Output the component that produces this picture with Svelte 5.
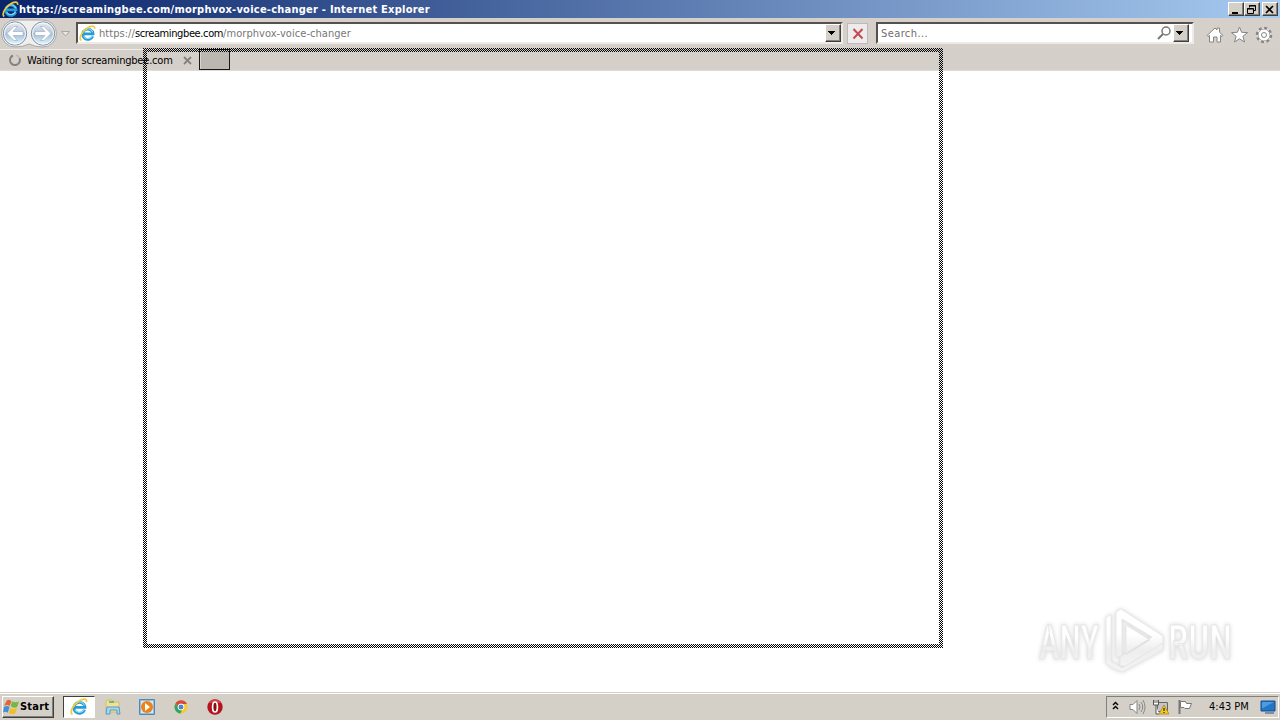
<script>
    let host = "screamingbee.com";
    let path = "/morphvox-voice-changer";
    let clock = "4:43 PM";
</script>

{#snippet ie(size)}
    <svg class="ie" width={size} height={size} viewBox="0 0 16 16">
        <path d="M13 10.500A4.900 4.900 0 1 1 13.300 8.300H4.600" fill="none" stroke="#259bd8" stroke-width="2.500" />
        <path d="M12.700 9.700A4.700 4.700 0 0 1 4.300 10.500M4 6.500A4.700 4.700 0 0 1 12.800 6.700" fill="none" stroke="#8bdcfa" stroke-width="1" />
        <path d="M2.100 14.600C-.8 12.400 3.200 5.700 7.600 3 11.100.5 15.200-.1 14.700 3.700" fill="none" stroke="#f2cb3c" stroke-width="1.600" />
    </svg>
{/snippet}

<main>
    <header class="titlebar">
        {@render ie(17)}
        <span class="title">https://{host}{path} - Internet Explorer</span>
        <div class="window-buttons">
            <button aria-label="Minimize"><svg width="13" height="11"><path d="M3 8h6v2H3z" /></svg></button>
            <button aria-label="Restore"><svg width="13" height="11"><path d="M4.500 1.500h6v5h-2M4.500 1.500v2M4 2h7M2.500 4.500h6v5h-6zM2 5h7" fill="none" stroke="#000" /></svg></button>
            <button class="close" aria-label="Close"><svg width="13" height="11"><path d="M3 2l7 7M10 2l-7 7" stroke="#000" stroke-width="1.700" /></svg></button>
        </div>
    </header>

    <nav>
        <svg class="history" width="75" height="31" viewBox="0 0 75 31">
            <defs>
                <linearGradient id="glass" x2="0" y2="1">
                    <stop stop-color="#e9edf2" />
                    <stop offset=".45" stop-color="#bdcbdc" />
                    <stop offset=".55" stop-color="#a9c2da" />
                    <stop offset="1" stop-color="#e4fbff" />
                </linearGradient>
            </defs>
            <path d="M15 2H43A13 13 0 0 1 43 29Q35 29 29 26Q23 29 15 29A13 13 0 0 1 15 2" fill="#f1efed" stroke="#aaa7a7" />
            {#each [15, 43] as x}
                <circle cx={x} cy="15.500" r="11.700" fill="url(#glass)" stroke="#8494a5" />
                <circle cx={x} cy="15.500" r="10.500" fill="none" stroke="#f3faff" />
            {/each}
            <path d="M7 15.500l7-7h3.500l-4.500 5h10v4H13l4.500 5H14zM51 15.500l-7-7h-3.500l4.500 5H35v4h10l-4.500 5H44z" fill="#fff" stroke="#93a7bc" stroke-width=".6" />
            <path d="M61.500 13.500h8l-4 4.500z" fill="#e9e6e2" stroke="#aaa6a3" />
        </svg>
        <div class="field address">
            {@render ie(17)}
            <span class="url">https://<b>{host}</b>{path}</span>
            <button class="drop" aria-label="Show address list"><svg width="12" height="14"><path d="M2 5h7v1H8v1H7v1H6v1H5V8H4V7H3V6H2z" /></svg></button>
        </div>
        <button class="stop" aria-label="Stop">
            <svg width="18" height="18"><path d="M4.500 4l9 9.500M13.500 4l-9 9.500" stroke="#c44c50" stroke-width="2" /></svg>
        </button>
        <div class="field search">
            <span class="hint">Search...</span>
            <svg class="lens" width="15" height="16"><circle cx="9" cy="6" r="4" fill="none" stroke="#777" stroke-width="1.500" /><path d="M6 9l-5 5" stroke="#777" stroke-width="2" /></svg>
            <button class="drop" aria-label="Search options"><svg width="12" height="14"><path d="M2 5h7v1H8v1H7v1H6v1H5V8H4V7H3V6H2z" /></svg></button>
        </div>
        <svg class="tools" width="72" height="22" viewBox="0 0 72 22">
            <g fill="#fff" stroke="#858585">
                <path d="M1 11.500L9 4l2 2V4h2.500v4.200L17 11.500l-1 1-1.500-1V18H11v-5H7.500v5H3.500v-6.500l-1.500 1z" />
                <path d="M33.500 3l2.100 5.300 5.900.3-4.600 3.700 1.600 5.700-5-3.200-5 3.200 1.600-5.700-4.600-3.700 5.900-.3z" />
                <circle cx="58" cy="11" r="7" stroke-width="2.500" stroke-dasharray="2.900 2.598" />
                <circle cx="58" cy="11" r="6" stroke-width=".8" />
                <circle cx="58" cy="11" r="2.500" />
            </g>
        </svg>
    </nav>

    <div class="tabs">
        <div class="tab">
            <svg width="14" height="14"><path d="M5 2.500A5 5 0 1 0 11.500 5" fill="none" stroke="#858381" stroke-width="2" /><path d="M8 2.200A5 5 0 0 1 11.500 5" fill="none" stroke="#bbb8b4" stroke-width="1.500" /></svg>
            <span class="tab-title">Waiting for {host}</span>
            <svg class="tab-close" width="9" height="9"><path d="M1 1l7 7M8 1L1 8" stroke="#858280" stroke-width="1.800" /></svg>
        </div>
        <button class="new-tab" aria-label="New tab"></button>
    </div>

    <section class="page">
        <svg class="watermark" width="232" height="80" viewBox="0 0 232 80">
            <defs>
                <linearGradient id="fade" x2="0" y2="1">
                    <stop offset=".4" stop-color="#fff" />
                    <stop offset=".65" stop-color="#eee" />
                    <stop offset="1" stop-color="#f4f4f4" />
                </linearGradient>
            </defs>
            <g class="mark" fill="url(#fade)">
                <text x="9" y="59" textLength="60" lengthAdjust="spacingAndGlyphs">ANY</text>
                <text x="138" y="59" textLength="64" lengthAdjust="spacingAndGlyphs">RUN</text>
                <path fill-rule="evenodd" d="M91 9l42 27v7L96 66h-6v-9l32-20-30-18v36l-6 3V12zM81 14v47l11 7 41-25v7L92 72l-10-4-6-5V18zM96 25l24 15-24 15z" />
            </g>
        </svg>
    </section>

    <footer>
        <button class="start">
            <svg width="17" height="18" viewBox="0 0 18 18">
                <path d="M4 2Q7 0 9 3L7 8Q4 6 1 8z" fill="#e66432" />
                <path d="M10 3q3 2 7 0l-2 6q-4 2-7-1z" fill="#76b83e" />
                <path d="M1 9q3-2 6 0l-2 6q-3-2-5 0z" fill="#438ed6" />
                <path d="M8 10q3 2 7 0l-2 6q-4 2-7-1z" fill="#f2bd2c" />
            </svg>
            <span>Start</span>
        </button>
        <div class="task active">{@render ie(18)}</div>
        <div class="task">
            <svg width="18" height="18">
                <path d="M3 2h5l2 2h5v10H2V4z" fill="#f3e098" stroke="#d8bd64" />
                <path d="M5 4h5" stroke="#51a875" stroke-width="1.500" />
                <path d="M3 9h12l1 7h-3v-4H6v4H2z" fill="#a2d8f4" stroke="#5999bc" />
            </svg>
        </div>
        <div class="task">
            <svg width="18" height="18">
                <path d="M1.500 1.500h15v15h-15z" fill="#8ebfe3" stroke="#4e88bd" />
                <path d="M3 3h12v12H3z" fill="#d6e9f5" />
                <circle cx="9" cy="9" r="6" fill="#ef8215" /><path d="M7 5l5 4-5 4z" fill="#fff" />
            </svg>
        </div>
        <div class="task">
            <svg width="18" height="18">
                <circle cx="9" cy="9" r="6.500" fill="#f5cb31" />
                <path d="M9 9L3.200 6A6.500 6.500 0 0 1 15 6H9z" fill="#dc4839" />
                <path d="M3.200 6A6.500 6.500 0 0 0 8.500 15.500L11 10 9 9z" fill="#39a260" />
                <circle cx="9" cy="9" r="3" fill="#4c86ce" stroke="#fff" />
            </svg>
        </div>
        <div class="task">
            <svg width="18" height="18"><circle cx="9" cy="9" r="7.700" fill="#b4141c" /><path d="M3 5a7 7 0 0 1 12 0z" fill="#d5444b" /><ellipse cx="9" cy="9" rx="2.400" ry="5" fill="#8c0c12" stroke="#fff" stroke-width="1.700" /></svg>
        </div>
        <div class="tray">
            <svg class="chevrons" width="7" height="10"><path d="M1 4l2.500-2.500L6 4M1 8l2.500-2.500L6 8" fill="none" stroke="#000" stroke-width="1.400" /></svg>
            <svg class="sound" width="18" height="18"><path d="M2 6.500h3l4-4v13l-4-4H2z" fill="#fff" stroke="#858585" /><path d="M11 6q2 3 0 6M13 4q3.500 5 0 10M15 2q4 7 0 14" fill="none" stroke="#888" /></svg>
            <svg class="network" width="18" height="18">
                <path d="M5.500 4.500h10v9h-10z" fill="#c4c4c4" stroke="#666" />
                <path d="M1.500 2v5h5V2M3 2v3M5 2v3M4 7v9h3" fill="#fff" stroke="#555" />
                <path d="M12 7l5 9H7z" fill="#f4cb22" stroke="#b4932d" /><path d="M12 10v3M12 14v1" stroke="#000" />
            </svg>
            <svg class="flag" width="18" height="18"><path d="M3.500 2v14" stroke="#777" stroke-width="2" /><path d="M4.500 3.500h5l1 2h5l-2 5H9l-1-1H4.500z" fill="#fff" stroke="#777" /></svg>
            <span class="clock">{clock}</span>
            <svg class="desktop" width="16" height="16"><path d="M1 2h14v10H1z" fill="#2674c6" stroke="#164b8f" /><path d="M2 3h12L3 9H2z" fill="#4b9de2" /><path d="M5 14h9" stroke="#7791ad" stroke-width="2" /></svg>
        </div>
    </footer>

    <!-- outline shown while a window is dragged -->
    <svg class="drag-outline" width="800" height="600">
        <defs>
            <pattern id="checks" width="2" height="2" patternUnits="userSpaceOnUse">
                <path d="M0 0h1v1H0zM1 1h1v1H1z" fill="#000" />
            </pattern>
        </defs>
        <path d="M0 0h800v600H0zM4 4v592h792V4z" fill="url(#checks)" fill-rule="evenodd" shape-rendering="crispEdges" />
    </svg>
</main>

<style>
    :global(body) {
        margin: 0;
        overflow: hidden;
    }

    * {
        box-sizing: border-box;
    }

    main {
        position: relative;
        display: flex;
        flex-direction: column;
        width: 1280px;
        height: 720px;
        background: #d4d0c8;
        font-family: "DejaVu Sans Condensed", "DejaVu Sans", sans-serif;
        font-stretch: condensed;
        font-size: 11px;
        color: #000;
    }

    svg {
        display: block;
        flex-shrink: 0;
    }

    button {
        padding: 0;
        font: inherit;
        color: #000;
        background: #d4d0c8;
        border: 1px solid;
        border-color: #fff #404040 #404040 #fff;
        box-shadow: inset -1px -1px #808080;
    }

    span {
        white-space: nowrap;
    }

    .titlebar {
        display: flex;
        align-items: center;
        height: 18px;
        padding: 0 2px;
        background: linear-gradient(90deg, #0a246a, #a6caf0);
    }

    .title {
        color: #fff;
        font-weight: bold;
        letter-spacing: 0.24px;
    }

    .window-buttons {
        display: flex;
        margin-left: auto;
    }

    .window-buttons button {
        width: 16px;
        height: 14px;
    }

    .window-buttons .close {
        margin-left: 2px;
    }

    nav {
        display: flex;
        align-items: flex-start;
        height: 31px;
        background: #d5d0ca;
    }

    .field {
        display: flex;
        align-items: center;
        height: 22px;
        margin-top: 4px;
        background: #fff;
        border: 2px solid;
        border-color: #55514e #eeebe6 #eeebe6 #55514e;
    }

    .address {
        width: 767px;
        margin-left: 1px;
    }

    .address .ie {
        margin-left: 1px;
    }

    .url {
        margin-left: 3px;
        padding-top: 1px;
        color: #777;
        letter-spacing: 0.05px;
    }

    .url b {
        font-weight: normal;
        color: #000;
        letter-spacing: -0.38px;
    }

    .drop {
        width: 16px;
        height: 18px;
        margin-left: auto;
    }

    .stop {
        display: grid;
        place-items: center;
        width: 21px;
        height: 21px;
        margin: 5px 8px 0 4px;
        background: #eeebec;
        border: 1px solid #bdb8bc;
        box-shadow: none;
    }

    .search {
        width: 318px;
    }

    .hint {
        margin-left: 3px;
        padding-top: 1px;
        color: #6e6e6e;
        letter-spacing: 0.4px;
    }

    .lens {
        margin-left: auto;
    }

    .search .drop {
        margin: 0 3px 0 1px;
    }

    .tools {
        margin: 6px 0 0 12px;
    }

    .tabs {
        display: flex;
        height: 22px;
        background: #d4cfc8;
        border-bottom: 1px solid #dedbd8;
    }

    .tab {
        display: flex;
        align-items: center;
        width: 199px;
        padding-left: 8px;
        border-top: 1px solid #eeece8;
    }

    .tab-title {
        margin-left: 5px;
        letter-spacing: -0.2px;
    }

    .tab-close {
        margin: 0 7px 0 auto;
    }

    .new-tab {
        width: 31px;
        height: 21px;
        background: #bdb7b1;
        border: 1px solid #181818;
        box-shadow: inset 1px 1px #d8d4d0;
    }

    .page {
        display: flex;
        flex: 1;
        justify-content: flex-end;
        align-items: flex-end;
        padding: 0 18px 12px 0;
        background: #fff;
    }

    .mark {
        font-family: Roboto, sans-serif;
        font-stretch: condensed;
        font-weight: 500;
        font-size: 48px;
        stroke: #e8e8e8;
        stroke-width: 1px;
        filter: drop-shadow(0 0 2px #d4d4d4);
    }

    footer {
        display: flex;
        align-items: center;
        height: 28px;
        padding: 1px 1px 1px 2px;
        background: #d4d0c8;
        border-top: 1px solid #d4d0c8;
        box-shadow: inset 0 1px #fff;
    }

    .start {
        display: flex;
        align-items: center;
        width: 52px;
        height: 22px;
        font-weight: bold;
        letter-spacing: 0.2px;
    }

    .task {
        display: grid;
        place-items: center;
        width: 32px;
        height: 22px;
        margin-right: 2px;
    }

    .active {
        margin-left: 9px;
        background: #fff;
        border: 1px solid;
        border-color: #404040 #fff #fff #404040;
    }

    .tray {
        display: flex;
        align-items: center;
        width: 173px;
        height: 22px;
        margin-left: auto;
        padding-left: 5px;
        border: 1px solid;
        border-color: #808080 #fff #fff #808080;
    }

    .chevrons {
        margin-bottom: 2px;
    }

    .sound {
        margin-left: 9px;
    }

    .network {
        margin-left: 6px;
    }

    .flag {
        margin-left: 6px;
    }

    .clock {
        margin-left: 15px;
    }

    .desktop {
        margin: 0 2px 0 auto;
    }

    .drag-outline {
        position: absolute;
        left: 143px;
        top: 48px;
        pointer-events: none;
    }
</style>
